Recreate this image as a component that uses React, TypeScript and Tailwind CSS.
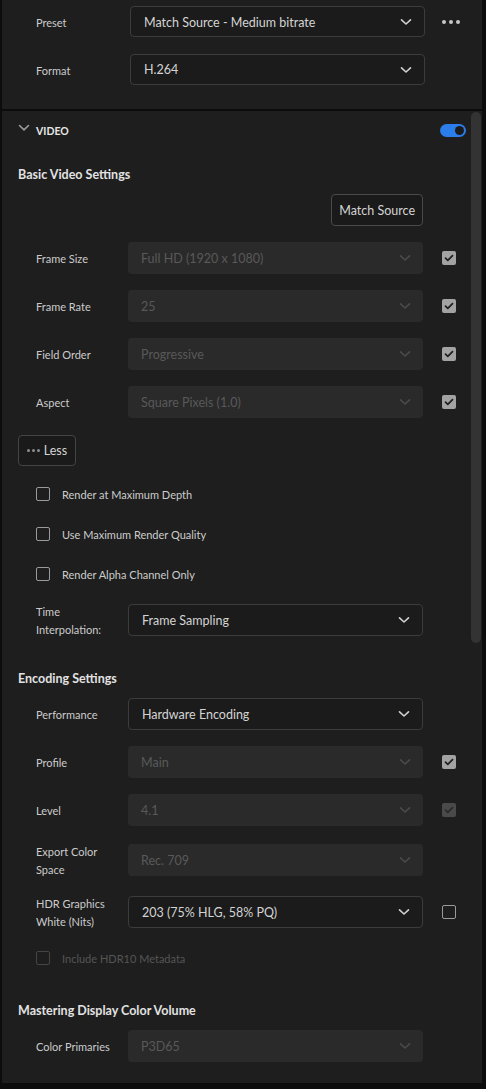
import React from "react";

const FONT = { fontFamily: "Lato, 'Noto Sans', 'Liberation Sans', sans-serif" };

function Chevron({ dim }: { dim?: boolean }) {
  return (
    <svg width="12" height="8" viewBox="0 0 12 8" fill="none">
      <path
        d="M1.5 1.8 L6 6 L10.5 1.8"
        stroke={dim ? "#4a4a4a" : "#d0d0d0"}
        strokeWidth="1.6"
        strokeLinecap="round"
        strokeLinejoin="round"
      />
    </svg>
  );
}

function Dropdown({ value, disabled }: { value: string; disabled?: boolean }) {
  return (
    <div
      className={
        "flex h-[32px] w-[295px] shrink-0 items-center justify-between rounded-[4px] pl-[13px] pr-[12px] text-[12.5px] " +
        (disabled
          ? "bg-[#2a2a2a] text-[#595959]"
          : "border border-[#3c3c3c] bg-[#1b1b1b] text-[#d4d4d4]")
      }
    >
      <span className="pt-[2px]">{value}</span>
      <Chevron dim={disabled} />
    </div>
  );
}

function Check({ state }: { state: "on" | "dimon" | "off" | "dimoff" }) {
  if (state === "on" || state === "dimon") {
    return (
      <div
        className={
          "flex h-[14px] w-[14px] items-center justify-center rounded-[2px] " +
          (state === "on" ? "bg-[#a3a3a3]" : "bg-[#4a4a4a]")
        }
      >
        <svg width="10" height="8" viewBox="0 0 10 8" fill="none">
          <path
            d="M1.5 4.2 L3.8 6.4 L8.5 1.6"
            stroke={state === "on" ? "#1e1e1e" : "#2a2a2a"}
            strokeWidth="1.7"
            strokeLinecap="round"
            strokeLinejoin="round"
          />
        </svg>
      </div>
    );
  }
  return (
    <div
      className={
        "h-[14px] w-[14px] rounded-[2px] border-[1.5px] " +
        (state === "off" ? "border-[#9a9a9a]" : "border-[#454545]")
      }
    />
  );
}

function Row({
  label,
  value,
  disabled,
  check,
  mt,
}: {
  label: React.ReactNode;
  value: string;
  disabled?: boolean;
  check?: "on" | "dimon" | "off" | "dimoff";
  mt: string;
}) {
  return (
    <div className={"flex h-[32px] items-center pl-[34px] " + mt}>
      <div className="w-[92px] shrink-0 pt-[2px] text-[11px] leading-[18px] text-[#cccccc]">{label}</div>
      <Dropdown value={value} disabled={disabled} />
      {check && (
        <div className="ml-[19px]">
          <Check state={check} />
        </div>
      )}
    </div>
  );
}

function CheckRow({ label, mt, dim }: { label: string; mt: string; dim?: boolean }) {
  return (
    <div className={"flex h-[20px] items-center pl-[34px] " + mt}>
      <Check state={dim ? "dimoff" : "off"} />
      <span className={"ml-[12px] pt-[2px] text-[11px] " + (dim ? "text-[#555555]" : "text-[#cccccc]")}>
        {label}
      </span>
    </div>
  );
}

function Heading({ children, mt }: { children: React.ReactNode; mt: string }) {
  return (
    <div className={"flex h-[20px] items-center pl-[16px] pt-[2px] text-[12.5px] font-bold text-[#e2e2e2] " + mt}>
      {children}
    </div>
  );
}

export default function App() {
  return (
    <div className="flex h-[1089px] w-[486px] flex-col bg-[#0c0c0c]" style={FONT}>
      {/* Top section */}
      <div className="ml-[2px] h-[109px] w-[480px] bg-[#1e1e1e]">
        <div className="flex items-center pl-[34px] pt-[6px]">
          <div className="w-[94px] pt-[4px] text-[11px] text-[#cccccc]">Preset</div>
          <div className="flex h-[31px] w-[295px] items-center justify-between rounded-[4px] border border-[#3c3c3c] bg-[#1b1b1b] pl-[13px] pr-[12px] text-[12.5px] text-[#d4d4d4]">
            <span className="pt-[3px]">Match Source - Medium bitrate</span>
            <Chevron />
          </div>
          <div className="ml-[17px] flex gap-[3px]">
            <div className="h-[4px] w-[4px] rounded-full bg-[#c8c8c8]" />
            <div className="h-[4px] w-[4px] rounded-full bg-[#c8c8c8]" />
            <div className="h-[4px] w-[4px] rounded-full bg-[#c8c8c8]" />
          </div>
        </div>
        <div className="mt-[17px] flex items-center pl-[34px]">
          <div className="w-[94px] pt-[3px] text-[11px] text-[#cccccc]">Format</div>
          <div className="flex h-[31px] w-[295px] items-center justify-between rounded-[4px] border border-[#3c3c3c] bg-[#1b1b1b] pl-[13px] pr-[12px] text-[12.5px] text-[#d4d4d4]">
            <span className="pt-[2px]">H.264</span>
            <Chevron />
          </div>
        </div>
      </div>

      {/* Video section */}
      <div className="ml-[2px] mt-[2px] flex h-[972px] w-[480px] bg-[#1e1e1e]">
        <div className="w-[468px]">
          {/* header */}
          <div className="flex h-[38px] items-center pl-[16px] pr-[4px]">
            <svg width="12" height="8" viewBox="0 0 12 8" fill="none" className="-mt-[5px]">
              <path d="M1.5 1.5 L6 5.8 L10.5 1.5" stroke="#9a9a9a" strokeWidth="1.6" strokeLinecap="round" strokeLinejoin="round" />
            </svg>
            <span className="ml-[6px] pt-[3px] text-[10.5px] font-bold text-[#e6e6e6]">VIDEO</span>
            <div className="ml-auto flex h-[13px] w-[26px] items-center justify-end rounded-full bg-[#2b7de9] pr-[2px]">
              <div className="h-[9px] w-[9px] rounded-full bg-[#1b1b1b]" />
            </div>
          </div>

          <Heading mt="mt-[15px]">Basic Video Settings</Heading>

          <div className="mt-[10px] flex w-[421px] justify-end">
            <div className="flex h-[32px] items-center rounded-[4px] border border-[#4a4a4a] bg-[#1a1a1a] px-[7px] pt-[2px] text-[12.5px] text-[#d4d4d4]">
              Match Source
            </div>
          </div>

          <Row mt="mt-[16px]" label="Frame Size" value="Full HD (1920 x 1080)" disabled check="on" />
          <Row mt="mt-[16px]" label="Frame Rate" value="25" disabled check="on" />
          <Row mt="mt-[16px]" label="Field Order" value="Progressive" disabled check="on" />
          <Row mt="mt-[16px]" label="Aspect" value="Square Pixels (1.0)" disabled check="on" />

          <div className="ml-[16px] mt-[17px] flex h-[31px] w-[58px] items-center justify-center gap-[4px] rounded-[4px] border border-[#444444] bg-[#1a1a1a]">
            <div className="flex gap-[2px]">
              <div className="h-[3px] w-[3px] rounded-full bg-[#8c8c8c]" />
              <div className="h-[3px] w-[3px] rounded-full bg-[#8c8c8c]" />
              <div className="h-[3px] w-[3px] rounded-full bg-[#8c8c8c]" />
            </div>
            <span className="pt-[2px] text-[12.5px] text-[#d4d4d4]">Less</span>
          </div>

          <CheckRow mt="mt-[18px]" label="Render at Maximum Depth" />
          <CheckRow mt="mt-[20px]" label="Use Maximum Render Quality" />
          <CheckRow mt="mt-[20px]" label="Render Alpha Channel Only" />

          <Row
            mt="mt-[20px]"
            label={
              <>
                Time
                <br />
                Interpolation:
              </>
            }
            value="Frame Sampling"
          />

          <Heading mt="mt-[32px]">Encoding Settings</Heading>

          <Row mt="mt-[10px]" label="Performance" value="Hardware Encoding" />
          <Row mt="mt-[16px]" label="Profile" value="Main" disabled check="on" />
          <Row mt="mt-[16px]" label="Level" value="4.1" disabled check="dimon" />
          <Row
            mt="mt-[18px]"
            label={
              <>
                Export Color
                <br />
                Space
              </>
            }
            value="Rec. 709"
            disabled
          />
          <Row
            mt="mt-[20px]"
            label={
              <>
                HDR Graphics
                <br />
                White (Nits)
              </>
            }
            value="203 (75% HLG, 58% PQ)"
            check="off"
          />

          <CheckRow mt="mt-[20px]" label="Include HDR10 Metadata" dim />

          <Heading mt="mt-[32px]">Mastering Display Color Volume</Heading>

          <Row mt="mt-[10px]" label="Color Primaries" value="P3D65" disabled />
        </div>

        {/* scrollbar */}
        <div className="w-[12px] pl-[1px] pt-[1px]">
          <div className="h-[531px] w-[10px] rounded-full bg-[#333333]" />
        </div>
      </div>
    </div>
  );
}
